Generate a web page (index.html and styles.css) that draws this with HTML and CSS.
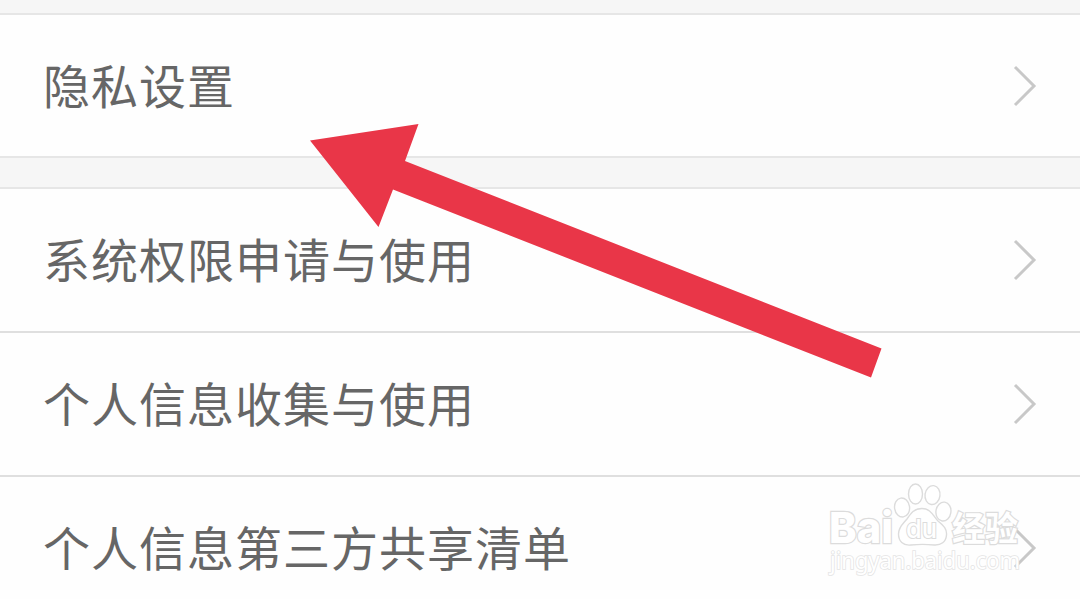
FILE: index.html
```
<!DOCTYPE html>
<html lang="zh-CN">
<head>
    <meta charset="UTF-8">
    <meta name="viewport" content="width=device-width, initial-scale=1.0">
    <title>隐私设置</title>
    <link rel="stylesheet" href="styles.css">
</head>

<body>
    <div class="page">
        <ul class="list">
            <li>
                <span>隐私设置</span>
                <svg class="more" viewBox="0 0 24 42"><path d="M2 2 L21 21 L2 40"/></svg>
            </li>
        </ul>
        <ul class="list about">
            <li>
                <span>系统权限申请与使用</span>
                <svg class="more" viewBox="0 0 24 42"><path d="M2 2 L21 21 L2 40"/></svg>
            </li>
            <li>
                <span>个人信息收集与使用</span>
                <svg class="more" viewBox="0 0 24 42"><path d="M2 2 L21 21 L2 40"/></svg>
            </li>
            <li>
                <span>个人信息第三方共享清单</span>
                <svg class="more" viewBox="0 0 24 42"><path d="M2 2 L21 21 L2 40"/></svg>
            </li>
        </ul>
        <!-- 水印 -->
        <svg class="watermark" viewBox="820 480 210 100">
            <text class="name" x="829" y="543" font-size="43" textLength="64" lengthAdjust="spacingAndGlyphs">Bai</text>
            <ellipse cx="902" cy="507.500" rx="7.500" ry="9.500" transform="rotate(-8 902 507)"/>
            <ellipse cx="915.500" cy="494" rx="7" ry="10"/>
            <ellipse cx="932.500" cy="495" rx="7.500" ry="9.500" transform="rotate(8 932 495)"/>
            <ellipse cx="943.500" cy="511.500" rx="7.500" ry="9.500" transform="rotate(8 943 511)"/>
            <path d="M922 508.500 C931 508.500 933 516 938 521 C944 526 947 529 946.500 535 C946 542 941 545.500 934 545 C925 544 920 544 911 545 C903 546 898.500 541 898.500 534 C898.500 527 903 524 907 519 C911 513 914 508.500 922 508.500 Z"/>
            <text class="du" x="906" y="538" font-size="26" textLength="31" lengthAdjust="spacingAndGlyphs">du</text>
            <text class="cn" x="952" y="541" font-size="34" textLength="66" lengthAdjust="spacingAndGlyphs">经验</text>
            <text class="url" x="830" y="569" font-size="23" textLength="190" lengthAdjust="spacingAndGlyphs">jingyan.baidu.com</text>
        </svg>
        <!-- 红色箭头 -->
        <svg class="arrow" viewBox="0 0 1080 599">
            <polygon points="310,140.500 418.500,124 405,161 881.500,348.500 871,377.500 393,189.500 378.500,227"/>
        </svg>
    </div>
</body>

</html>
```
FILE: styles.css
```
* {
    margin: 0;
    padding: 0;
    box-sizing: border-box;
}

body {
    background-color: #f6f6f6;
    font-family: "Noto Sans CJK SC", sans-serif;
}

.page {
    position: relative;
    width: 1080px;
    height: 599px;
    padding-top: 13px;
    overflow: hidden;
}

.list {
    list-style: none;
    background-color: #fefefe;
    border-top: 2px solid #e6e6e6;
    border-bottom: 2px solid #e6e6e6;
    margin-bottom: 29px;
}

.list li {
    display: flex;
    align-items: center;
    justify-content: space-between;
    height: 141px;
    padding: 0 43px 0 43px;
}

.about li:first-child {
    height: 142px;
}

.list li + li {
    height: 144px;
    border-top: 2px solid #dfdfdf;
}

.list span {
    font-size: 47px;
    letter-spacing: 1px;
    line-height: 70px;
    padding-bottom: 4px;
    color: #666;
}

.more {
    width: 24px;
    height: 42px;
    fill: none;
    stroke: #c8c8c8;
    stroke-width: 3;
}

.arrow {
    position: absolute;
    left: 0;
    top: 0;
    width: 1080px;
    height: 599px;
    fill: #e93648;
}

.watermark {
    position: absolute;
    left: 820px;
    top: 480px;
    width: 210px;
    height: 100px;
    overflow: visible;
    fill: #fff;
    stroke: #dcdcdc;
    stroke-width: 1.4;
}

.watermark text {
    paint-order: stroke;
    stroke-width: 2.4;
}

.watermark .name {
    font-family: "Inter", sans-serif;
    font-weight: 800;
}

.watermark .du {
    font-family: "Inter", sans-serif;
    font-weight: 500;
    stroke-width: 2;
}

.watermark .cn {
    font-family: "Noto Sans CJK SC", sans-serif;
    font-weight: 700;
}

.watermark .url {
    font-family: "Noto Sans", sans-serif;
    stroke: #e4e4e4;
    stroke-width: 1.6;
}
```
